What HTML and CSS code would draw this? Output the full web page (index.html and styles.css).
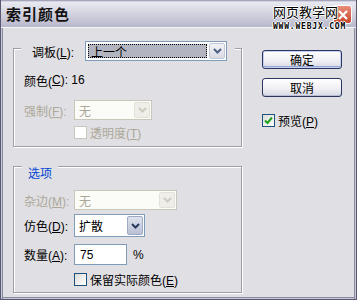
FILE: index.html
```html
<!DOCTYPE html>
<html lang="zh-CN">
<head>
    <meta charset="UTF-8">
    <title>索引颜色</title>
    <link rel="stylesheet" href="styles.css">
</head>
<body>
    <div class="window">
        <div class="titlebar">
            <span class="title">索引颜色</span>
            <div class="watermark">
                <span class="wm-big">网页教学网</span>
                <span class="wm-small">WWW.WEBJX.COM</span>
            </div>
            <div class="close">
                <svg width="12" height="12" viewBox="0 0 12 12"><path d="M2 2L10 10M10 2L2 10" stroke="#fff" stroke-width="2.2"/></svg>
            </div>
        </div>

        <div class="content">
            <div class="main">
                <div class="group group-palette">
                    <div class="group-head palette-head">
                        <label class="palette-label">调板(<u>L</u>):</label>
                        <div class="select focused palette-select">
                            <div class="value"><span class="sel">上一个</span></div>
                            <div class="arrow"><svg width="9" height="6" viewBox="0 0 9 6"><path d="M1 1L4.5 4.5L8 1" stroke="#4d6185" stroke-width="2" fill="none"/></svg></div>
                        </div>
                    </div>
                    <div class="row colors-row">颜色(<u>C</u>): 16</div>
                    <div class="row field force-row">
                        <label class="disabled">强制(<u>F</u>):</label>
                        <div class="select disabled force-select">
                            <div class="value">无</div>
                            <div class="arrow"><svg width="9" height="6" viewBox="0 0 9 6"><path d="M1 1L4.5 4.5L8 1" stroke="#cdcbbe" stroke-width="2" fill="none"/></svg></div>
                        </div>
                    </div>
                    <div class="row check-row trans-row">
                        <span class="check disabled"></span>
                        <span class="disabled">透明度(<u>T</u>)</span>
                    </div>
                </div>

                <div class="group group-options">
                    <div class="group-head legend">选项</div>
                    <div class="row field matte-row">
                        <label class="disabled">杂边(<u>M</u>):</label>
                        <div class="select disabled matte-select">
                            <div class="value">无</div>
                            <div class="arrow"><svg width="9" height="6" viewBox="0 0 9 6"><path d="M1 1L4.5 4.5L8 1" stroke="#cdcbbe" stroke-width="2" fill="none"/></svg></div>
                        </div>
                    </div>
                    <div class="row field dither-row">
                        <label>仿色(<u>D</u>):</label>
                        <div class="select dither-select">
                            <div class="value">扩散</div>
                            <div class="arrow"><svg width="9" height="6" viewBox="0 0 9 6"><path d="M1 1L4.5 4.5L8 1" stroke="#2a3a5e" stroke-width="2" fill="none"/></svg></div>
                        </div>
                    </div>
                    <div class="row field amount-row">
                        <label>数量(<u>A</u>):</label>
                        <div class="text-input">75</div>
                        <span class="percent">%</span>
                    </div>
                    <div class="row check-row keep-row">
                        <span class="check"></span>
                        <span>保留实际颜色(<u>E</u>)</span>
                    </div>
                </div>
            </div>

            <div class="side">
                <button class="btn default">确定</button>
                <button class="btn">取消</button>
                <div class="check-row preview-row">
                    <span class="check checked"><svg width="9" height="9" viewBox="0 0 9 9"><path d="M1 4.5L3.5 7L8 1.5" stroke="#21a121" stroke-width="2" fill="none"/></svg></span>
                    <span>预览(<u>P</u>)</span>
                </div>
            </div>
        </div>
    </div>
</body>
</html>
```

FILE: styles.css
```css
body, html {
    margin: 0;
    padding: 0;
    font-family: "Liberation Sans", "Noto Sans CJK SC", sans-serif;
    font-size: 12px;
    color: #000;
    background: #e0dfe3;
}

.window {
    width: 357px;
    height: 300px;
    box-sizing: border-box;
    border: 1px solid #585872;
    border-top: none;
    box-shadow: inset 1px 0 0 #c6c6d4, inset 2px 0 0 #8a8aa2, inset -1px 0 0 #c6c6d4, inset -2px 0 0 #8a8aa2, inset 0 -1px 0 #c6c6d4, inset 0 -2px 0 #8a8aa2;
    background: #e0dfe3;
    overflow: hidden;
}

.titlebar {
    height: 28px;
    position: relative;
    display: flex;
    align-items: center;
    padding-left: 6px;
    background: linear-gradient(to bottom, #8e8eaa 0, #e9e9f1 2px, #d6d6e2 45%, #b8b8cc 100%);
    border-bottom: 1px solid #f4f4f8;
    box-sizing: border-box;
    margin: 0 -1px;
}

.title {
    font-size: 15px;
    font-weight: bold;
    color: #111;
    letter-spacing: 1px;
}

.close {
    position: absolute;
    right: 5px;
    top: 5px;
    width: 19px;
    height: 19px;
    border-radius: 3px;
    background: linear-gradient(to bottom, #e78e7a, #c8452c);
    border: 1px solid #fff;
    box-sizing: border-box;
    display: flex;
    align-items: center;
    justify-content: center;
}

.watermark {
    position: absolute;
    right: 11px;
    top: 6px;
    display: flex;
    flex-direction: column;
    align-items: center;
    z-index: 2;
    line-height: 1;
}

.wm-big {
    font-size: 13px;
    color: #000;
    text-shadow: 1px 0 #fff, -1px 0 #fff, 0 1px #fff, 0 -1px #fff;
    margin-right: 8px;
}

.wm-small {
    font-family: "DejaVu Sans Mono", monospace;
    font-size: 8px;
    font-weight: bold;
    color: #000;
    margin-top: 4px;
    letter-spacing: 0.8px;
    text-shadow: 1px 0 #fff, -1px 0 #fff, 0 1px #fff, 0 -1px #fff;
}

.content {
    display: flex;
    padding: 20px 0 0 12px;
}

.main {
    width: 229px;
}

.group {
    border: 1px solid #a0a0a4;
    box-shadow: 1px 1px 0 #fff, inset 1px 1px 0 #fff;
    padding: 0 0 0 10px;
}

.group-head {
    background: #e0dfe3;
    display: flex;
    align-items: center;
}

.palette-head {
    margin: -8px 6px 0 -3px;
    height: 20px;
}

.palette-label {
    margin-left: 11px;
    width: 53px;
}

.group-palette {
    padding-bottom: 7px;
}

.group-options {
    margin-top: 19px;
    padding-bottom: 6px;
}

.legend {
    display: inline-flex;
    margin: -8px 0 0 -2px;
    padding: 0 6px;
    height: 14px;
    color: #0046d5;
}

.row {
    display: flex;
    align-items: center;
}

.field label {
    width: 50px;
}

.colors-row {
    margin-top: 12px;
    height: 14px;
}

.force-row {
    margin-top: 13px;
}

.trans-row {
    margin-top: 6px;
}

.matte-row {
    margin-top: 9px;
}

.dither-row {
    margin-top: 4px;
}

.amount-row {
    margin-top: 7px;
}

.keep-row {
    margin-top: 8px;
}

.check-row {
    display: flex;
    align-items: center;
    padding-left: 50px;
    height: 13px;
}

.disabled {
    color: #aca899;
}

/* selects */
.select {
    display: flex;
    height: 20px;
    box-sizing: border-box;
    border: 1px solid #7f9db9;
    background: #fff;
    padding: 1px;
}

.select .value {
    flex: 1;
    display: flex;
    align-items: center;
    padding-left: 3px;
}

.select .arrow {
    width: 16px;
    display: flex;
    align-items: center;
    justify-content: center;
    background: linear-gradient(to bottom, #f3f3f6, #d9dbe4);
    border: 1px solid #c3c8d6;
    border-radius: 2px;
    box-sizing: border-box;
}

.palette-select {
    width: 142px;
    margin-left: 0;
}

.palette-select .value {
    padding: 1px;
}

.sel {
    flex: 1;
    align-self: stretch;
    display: flex;
    align-items: center;
    padding-left: 3px;
    background: #b2b4bf;
    outline: 1px dotted #000;
    outline-offset: -1px;
    margin-right: 1px;
}

.force-select {
    width: 78px;
}

.matte-select {
    width: 103px;
}

.select.disabled {
    border-color: #c9c7ba;
    background: #fbfbf8;
}

.select.disabled .arrow {
    background: #efeee8;
    border-color: #e4e2d8;
}

.dither-select {
    width: 71px;
    height: 23px;
}

.dither-select .arrow {
    background: linear-gradient(to bottom, #dfe3ee, #b9c0d4);
    border-color: #9eabc6;
}

.text-input {
    width: 53px;
    height: 21px;
    box-sizing: border-box;
    border: 1px solid #7f9db9;
    background: #fff;
    display: flex;
    align-items: center;
    padding-left: 5px;
}

.percent {
    margin-left: 6px;
}

/* checkboxes */
.check {
    width: 13px;
    height: 13px;
    box-sizing: border-box;
    border: 1px solid #1c5180;
    background: linear-gradient(135deg, #dcdcd7, #fff);
    margin-right: 3px;
    display: flex;
    align-items: center;
    justify-content: center;
}

.check.disabled {
    border-color: #cac8bb;
    background: #fff;
}

/* right column */
.side {
    display: flex;
    flex-direction: column;
    margin-left: 20px;
    padding-top: 2px;
}

.btn {
    width: 80px;
    height: 19px;
    font: inherit;
    color: #000;
    border: 1px solid #2a3560;
    border-radius: 3px;
    background: linear-gradient(to bottom, #fff 0, #f2f2f6 50%, #d8d8e2 100%);
    box-shadow: inset 0 -1px 0 #b8bcd6;
    padding: 0;
    margin-bottom: 9px;
}

.btn.default {
    box-shadow: inset 0 0 0 1px #c5d0ef, inset 0 -1px 0 1px #98a6d8;
}

.preview-row {
    padding-left: 0;
    margin-top: 8px;
}
```
